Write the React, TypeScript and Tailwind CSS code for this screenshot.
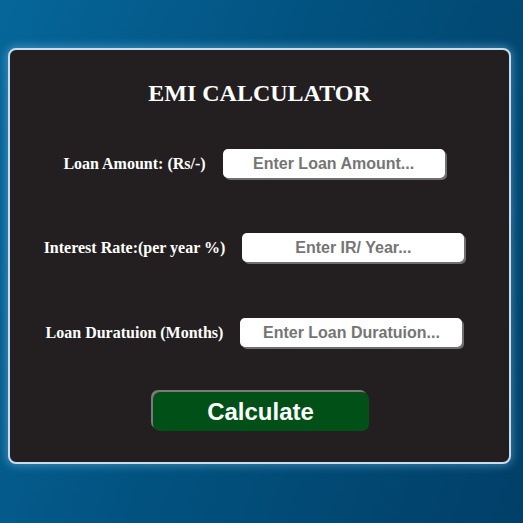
import { useState } from "react";

const rows = [
  { label: "Loan Amount: (Rs/-)", placeholder: "Enter Loan Amount...", mt: "mt-[42px]" },
  { label: "Interest Rate:(per year %)", placeholder: "Enter IR/ Year...", mt: "mt-[55px]" },
  { label: "Loan Duratuion (Months)", placeholder: "Enter Loan Duratuion...", mt: "mt-[56px]" },
];

export default function App() {
  const [values, setValues] = useState<string[]>(["", "", ""]);

  const handleChange = (i: number, v: string) => {
    const next = [...values];
    next[i] = v;
    setValues(next);
  };

  return (
    <div className="w-[523px] h-[523px] overflow-hidden bg-[linear-gradient(110deg,#06669a_0%,#02527f_45%,#013f68_100%)] pt-[48px] pl-[8px]">
      <div className="w-[503px] h-[416px] bg-[#231f20] border-2 border-[#c9dceb] rounded-[8px] shadow-[0_0_8px_2px_rgba(120,190,230,0.45)] flex flex-col items-center pt-[29px]">
        <h1 className="text-[24px] leading-[28px] font-bold text-white font-['Liberation_Serif',serif]">
          EMI CALCULATOR
        </h1>

        {rows.map((row, i) => (
          <div key={row.label} className={`${row.mt} flex items-center h-[29px] pr-[11px]`}>
            <label className="text-[16px] font-bold text-white font-['Liberation_Serif',serif] mr-[17px]">
              {row.label}
            </label>
            <input
              type="text"
              value={values[i]}
              onChange={(e) => handleChange(i, e.target.value)}
              placeholder={row.placeholder}
              className="w-[222px] h-[29px] bg-white rounded-[5px] shadow-[2px_2px_0_#6f6f6f] text-center text-[16px] font-bold font-['Liberation_Sans',sans-serif] text-[#222] placeholder:text-[#757575] outline-none"
            />
          </div>
        ))}

        <button className="mt-[45px] ml-[2px] w-[216px] h-[39px] bg-[#005018] rounded-[7px] shadow-[-2px_-2px_0_#7a7a7a] text-white text-[24px] font-bold font-['Liberation_Sans',sans-serif]">
          Calculate
        </button>
      </div>
    </div>
  );
}
